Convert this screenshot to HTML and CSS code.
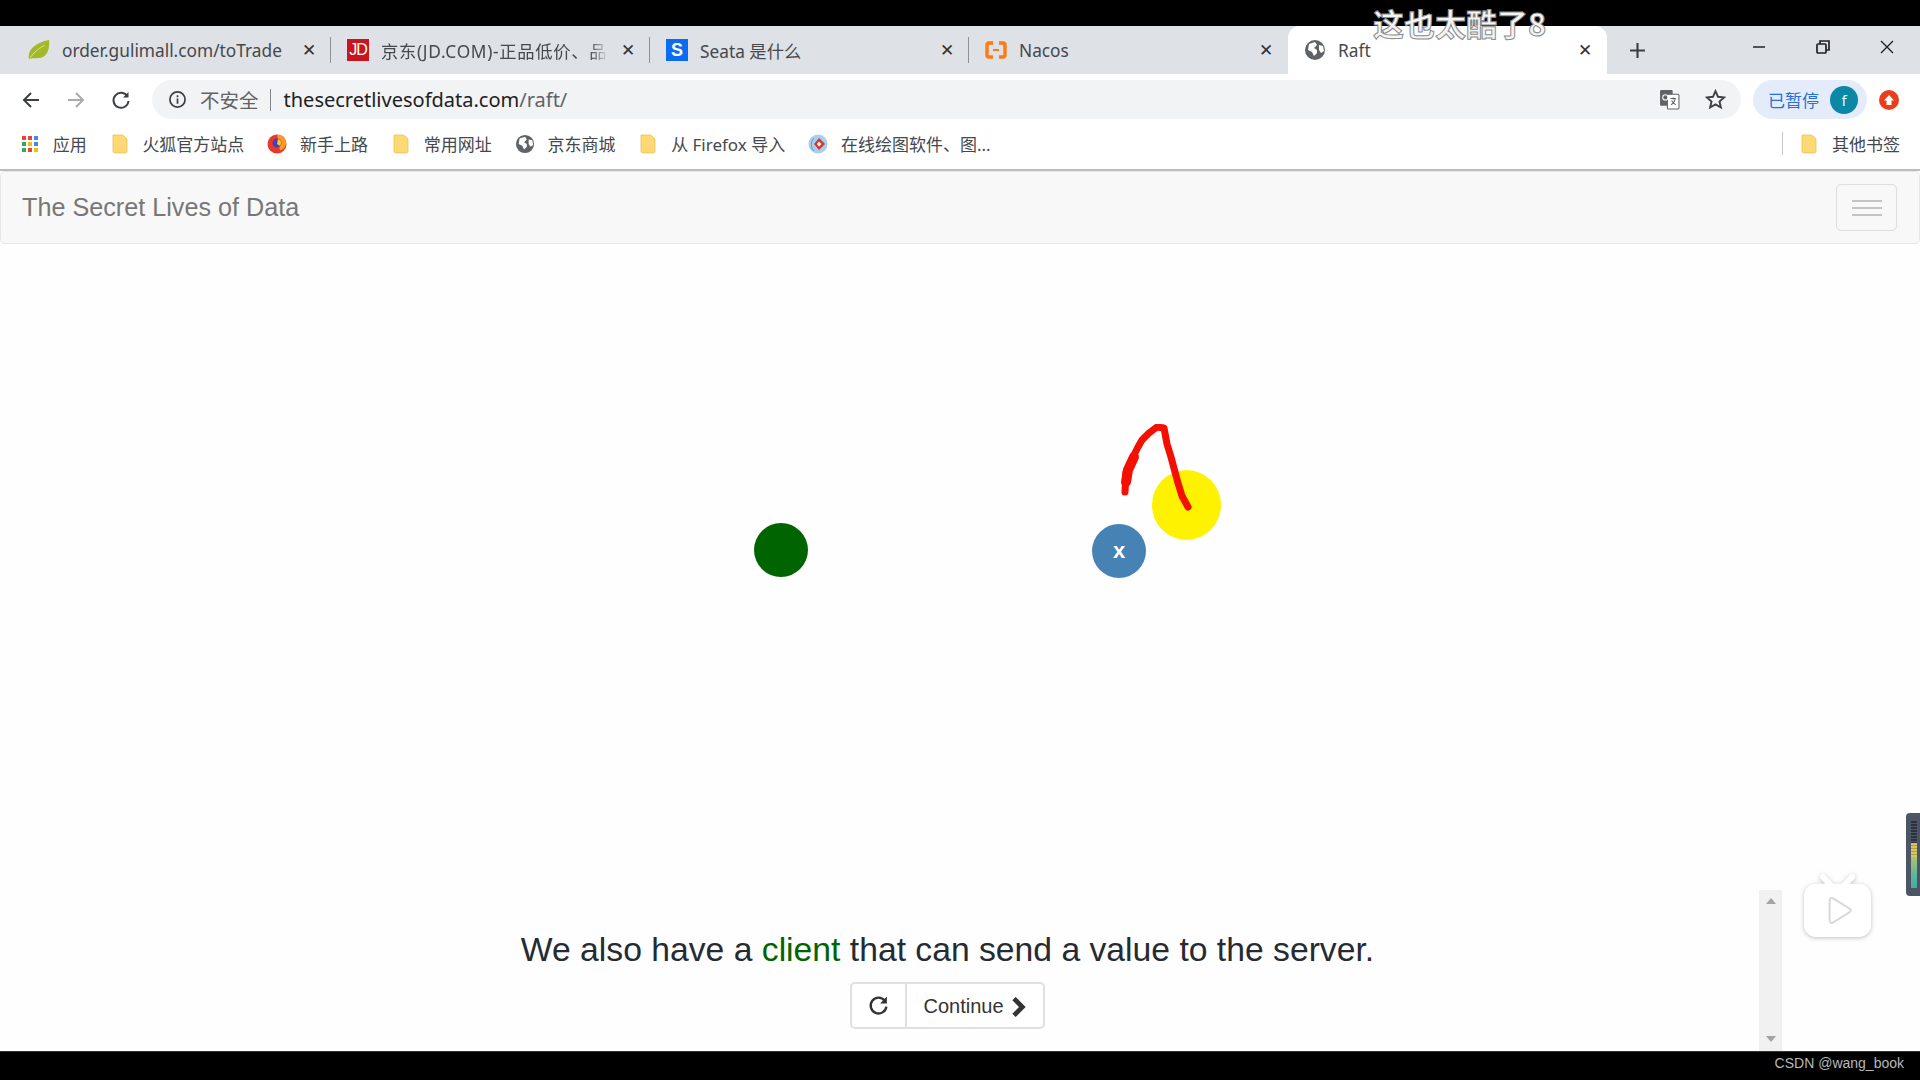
FILE: index.html
```html
<!DOCTYPE html>
<html lang="zh-CN">
<head>
  <meta charset="utf-8">
  <title>Raft</title>
  <link rel="stylesheet" href="styles.css">
</head>
<body>
  <div class="topbar"><span class="danmaku">这也太酷了8</span></div>

  <!-- tabs -->
  <div class="tabstrip">
    <div class="tab">
      <svg class="favicon leaf" viewBox="0 0 24 22"><path d="M1 21C-1 11 8 3 23 0c1 12-3 21-15 20-3 0-4 0-7 1z" fill="#a3b82a"/><path d="M2 20C7 13 12 9 18 6" stroke="#dfe6a0" fill="none"/></svg>
      <span class="tab-title">order.gulimall.com/toTrade</span>
      <span class="tab-close">✕</span>
    </div>
    <div class="tab">
      <span class="favicon box-jd">JD</span>
      <span class="tab-title fade">京东(JD.COM)-正品低价、品</span>
      <span class="tab-close">✕</span>
    </div>
    <div class="tab">
      <span class="favicon box-s">S</span>
      <span class="tab-title">Seata 是什么</span>
      <span class="tab-close">✕</span>
    </div>
    <div class="tab no-sep">
      <svg class="favicon" viewBox="0 0 22 22" fill="none" stroke="#ff7a10" stroke-width="3.400" stroke-linejoin="round"><path d="M8 4H4Q2 4 2 6v10q0 2 2 2h4M14 4h4q2 0 2 2v10q0 2-2 2h-4"/><path d="M8 11h6" stroke-width="2"/></svg>
      <span class="tab-title">Nacos</span>
      <span class="tab-close">✕</span>
    </div>
    <div class="tab active">
      <svg class="favicon" viewBox="0 0 22 22"><use href="#globe"/></svg>
      <span class="tab-title">Raft</span>
      <span class="tab-close">✕</span>
    </div>
    <svg class="newtab" viewBox="0 0 16 16"><path d="M8 1v14M1 8h14" stroke="#3c4043" stroke-width="2"/></svg>
    <div class="winctl">
      <svg viewBox="0 0 16 16"><path d="M2 8h12" stroke="#222" stroke-width="1.500"/></svg>
      <svg viewBox="0 0 16 16" fill="none" stroke="#222" stroke-width="1.700"><rect x="2" y="5" width="9" height="9" rx="1"/><path d="M5 5V2h9v9h-3"/></svg>
      <svg viewBox="0 0 16 16"><path d="M2 2l12 12M14 2L2 14" stroke="#222" stroke-width="1.400"/></svg>
    </div>
  </div>

  <!-- address bar -->
  <div class="toolbar">
    <svg class="navicon" viewBox="0 0 20 20" fill="none" stroke="#3c4043" stroke-width="2"><path d="M18 10H3M10 3l-7 7 7 7"/></svg>
    <svg class="navicon" viewBox="0 0 20 20" fill="none" stroke="#a8abaf" stroke-width="2"><path d="M2 10h15M10 3l7 7-7 7"/></svg>
    <svg class="navicon" viewBox="0 0 20 20" fill="none" stroke="#3c4043" stroke-width="2"><path d="M16.500 6.500A7.500 7.500 0 1 0 17.500 11"/><path d="M17.500 2v5.500H12" fill="#3c4043" stroke="none"/></svg>
    <div class="omnibox">
      <svg class="info" viewBox="0 0 20 20" fill="none" stroke="#3c4043" stroke-width="1.800"><circle cx="10" cy="10" r="8"/><path d="M10 9v5.500M10 5.500v2"/></svg>
      <span class="insecure">不安全</span>
      <span class="omni-sep"></span>
      <span class="url">thesecretlivesofdata.com<span class="url-path">/raft/</span></span>
      <svg class="omni-icon translate" viewBox="0 0 20 20"><rect x="1" y="1" width="12" height="15" rx="1" fill="#5f6368"/><rect x="8" y="5" width="11" height="14" rx="1" fill="#fff" stroke="#5f6368"/><path d="M11 9h5M13.500 8v2M15.500 9c-.5 3-2 5-4 6M12 11c1 2 2 3 4 4" stroke="#5f6368" fill="none"/><circle cx="6" cy="8" r="2.500" fill="none" stroke="#fff"/></svg>
      <svg class="omni-icon" viewBox="0 0 20 20" fill="none" stroke="#3c4043" stroke-width="1.800"><path d="M10 2l2.400 5.400 5.800.6-4.400 3.900 1.300 5.700L10 14.700l-5.100 2.900 1.300-5.700L1.800 8l5.800-.6z"/></svg>
    </div>
    <div class="paused">
      <span>已暂停</span>
      <span class="avatar">f</span>
    </div>
    <span class="ext"><svg viewBox="0 0 14 14"><path d="M7 2l5 5.500H9.500V12h-5V7.500H2z" fill="#fff"/></svg></span>
  </div>

  <!-- bookmarks -->
  <div class="bookmarks">
    <div class="bm">
      <svg class="bm-icon" viewBox="0 0 20 20"><g fill="#ea4335"><rect x="2" y="2" width="4" height="4"/><rect x="8" y="2" width="4" height="4"/></g><rect x="14" y="2" width="4" height="4" fill="#4285f4"/><rect x="2" y="8" width="4" height="4" fill="#34a853"/><rect x="8" y="8" width="4" height="4" fill="#fbbc05"/><rect x="14" y="8" width="4" height="4" fill="#4285f4"/><rect x="2" y="14" width="4" height="4" fill="#34a853"/><rect x="8" y="14" width="4" height="4" fill="#ea4335"/><rect x="14" y="14" width="4" height="4" fill="#fbbc05"/></svg>
      应用
    </div>
    <div class="bm"><svg class="bm-icon" viewBox="0 0 20 20"><use href="#folder"/></svg>火狐官方站点</div>
    <div class="bm">
      <svg class="bm-icon" viewBox="0 0 20 20"><circle cx="10" cy="10" r="9.500" fill="#e8392b"/><path d="M10 .5a9.500 9.500 0 0 1 9 7c.5 4-2 8-6 9z" fill="#ff9a1f"/><circle cx="10" cy="9" r="4.500" fill="#4a3fb5"/><path d="M11 5c3 1 4 4 2 7l-3-2z" fill="#ffca28"/></svg>
      新手上路
    </div>
    <div class="bm"><svg class="bm-icon" viewBox="0 0 20 20"><use href="#folder"/></svg>常用网址</div>
    <div class="bm"><svg class="bm-icon" viewBox="0 0 22 22"><use href="#globe"/></svg>京东商城</div>
    <div class="bm"><svg class="bm-icon" viewBox="0 0 20 20"><use href="#folder"/></svg>从 Firefox 导入</div>
    <div class="bm">
      <svg class="bm-icon" viewBox="0 0 20 20"><circle cx="10" cy="10" r="9.500" fill="#a9cfee"/><path d="M6 4a9 9 0 0 0 0 13" stroke="#5b9bd5" fill="none"/><path d="M11 4l6 6-6 6-5-6z" fill="#d9352b"/><path d="M11 7.500l2.500 2.500-2.500 2.500L8.800 10z" fill="#fff"/></svg>
      在线绘图软件、图...
    </div>
    <div class="bm-right">
      <span class="bm-sep"></span>
      <div class="bm"><svg class="bm-icon" viewBox="0 0 20 20"><use href="#folder"/></svg>其他书签</div>
    </div>
  </div>

  <!-- page -->
  <div class="page">
    <div class="navbar">
      <span class="brand">The Secret Lives of Data</span>
      <span class="hamburger"><i></i><i></i><i></i></span>
    </div>

    <div class="stage">
      <div class="node node-green"></div>
      <div class="node node-blue">x</div>
      <div class="node node-yellow"></div>
      <svg class="scribble" viewBox="0 0 80 90" fill="none" stroke="#f40f00" stroke-width="7" stroke-linecap="round" stroke-linejoin="round"><path d="M5 68L6 48 12 35 18 23 22 16 29 9 37 3 44 4 47 20 51 33 55 48 58 59 62 72 68 83"/><path d="M6 58L8 46 14 33" stroke-width="10"/></svg>
    </div>

    <div class="caption">
      <p class="caption-text">We also have a <span class="client">client</span> that can send a value to the server.</p>
      <div class="btn-group">
        <span class="btn btn-reset"><svg viewBox="0 0 20 20" fill="none" stroke="#333" stroke-width="2.200"><path d="M16 5.500A7.500 7.500 0 1 0 17.500 11"/><path d="M18 1.500v6.500h-6.500z" fill="#333" stroke="none"/></svg></span>
        <span class="btn">Continue <svg class="chevron" viewBox="0 0 12 18"><path d="M3 0l9 9-9 9-3-3 6-6-6-6z" fill="#333"/></svg></span>
      </div>
    </div>

    <div class="scrollbar"><i class="arrow-up"></i><i class="arrow-down"></i></div>

    <svg class="player" viewBox="0 0 70 66">
      <path d="M20 3l9 9M50 3l-9 9" stroke="#fff" stroke-width="6" stroke-linecap="round"/>
      <rect x="1" y="10" width="68" height="54" rx="12" fill="#fff"/>
      <path d="M27 27q0-4 4-2l16 10q3 2 0 4L31 49q-4 2-4-2z" fill="#fff" stroke="#d8d8d8" stroke-width="2"/>
    </svg>

    <div class="meter"><i class="m-off"></i><i class="m-mid"></i><i class="m-low"></i></div>
  </div>

  <div class="bottombar">CSDN @wang_book</div>

  <svg class="defs" width="0" height="0">
    <symbol id="folder" viewBox="0 0 20 20"><path d="M3 1h8q2 0 3 1l3 3v12q0 2-2 2H5q-2 0-2-2z" fill="#fdd976" stroke="#e8c354" stroke-width=".8"/></symbol>
    <symbol id="globe" viewBox="0 0 22 22"><circle cx="11" cy="11" r="10" fill="#5f6368"/><path d="M5 5l6-2 2 3-3 3 3 2v3l-3 3-2-4-4-2zM15 6l4 1 1 5-3 2-2-3z" fill="#fff"/></symbol>
  </svg>
</body>
</html>
```

FILE: styles.css
```css
* {
  box-sizing: border-box;
}
html, body {
  margin: 0;
  height: 100%;
}
body {
  width: 1920px;
  height: 1080px;
  overflow: hidden;
  display: flex;
  flex-direction: column;
  font-family: "Noto Sans", "Noto Sans CJK SC", sans-serif;
  color: #3c4043;
  background: #000;
}

/* black band and the danmaku over it */
.topbar {
  height: 26px;
  background: #000;
  position: relative;
}
.danmaku {
  position: absolute;
  left: 1373px;
  top: 3px;
  z-index: 5;
  font-family: "Noto Sans CJK SC", sans-serif;
  font-size: 31px;
  line-height: 40px;
  font-weight: 700;
  white-space: nowrap;
  color: #f4f4f4;
  -webkit-text-stroke: 1px #8c8c8c;
}

/* tabs */
.tabstrip {
  height: 48px;
  background: #dee1e6;
  display: flex;
  align-items: center;
  padding-left: 12px;
}
.tab {
  width: 319px;
  height: 48px;
  flex: none;
  display: flex;
  align-items: center;
  gap: 12px;
  padding: 0 14px 0 16px;
  position: relative;
  font-size: 17.300px;
  color: #45484d;
}
.tab::after {
  content: "";
  position: absolute;
  right: 0;
  top: 11px;
  height: 26px;
  width: 1px;
  background: #8e9196;
}
.tab.no-sep::after, .tab.active::after {
  display: none;
}
.tab.active {
  background: #fff;
  border-radius: 12px 12px 0 0;
}
.favicon {
  width: 22px;
  height: 22px;
  flex: none;
}
.box-jd, .box-s {
  display: flex;
  align-items: center;
  justify-content: center;
  font-family: "Liberation Sans", sans-serif;
  font-size: 16px;
  color: #fff;
}
.box-jd {
  background: #c9151e;
  letter-spacing: -1px;
}
.box-s {
  background: #0a6cf0;
  font-weight: 700;
  font-size: 18px;
}
.tab-title {
  flex: 1;
  min-width: 0;
  white-space: nowrap;
}
.fade {
  letter-spacing: 0.7px;
  -webkit-mask-image: linear-gradient(to right, #000 92%, transparent);
  mask-image: linear-gradient(to right, #000 92%, transparent);
}
.tab-close {
  width: 16px;
  font-size: 17px;
  text-align: center;
  color: #333;
  font-family: "DejaVu Sans", sans-serif;
}
.newtab {
  width: 17px;
  height: 17px;
  margin-left: 22px;
}
.winctl {
  display: flex;
  margin-left: auto;
  margin-right: 25px;
  margin-top: -7px;
  gap: 48px;
}
.winctl svg {
  width: 16px;
  height: 16px;
}

/* address bar */
.toolbar {
  height: 46px;
  background: #fff;
  display: flex;
  align-items: center;
  padding: 6px 21px 1px 21px;
}
.navicon {
  width: 20px;
  height: 20px;
  margin-right: 25px;
}
.navicon:nth-child(3) {
  margin-right: 21px;
}
.omnibox {
  flex: 1;
  height: 39px;
  margin-right: 12px;
  background: #f1f3f4;
  border-radius: 20px;
  display: flex;
  align-items: center;
  padding: 0 15px 0 16px;
}
.info {
  width: 19px;
  height: 19px;
}
.insecure {
  margin-left: 13px;
  font-size: 19.500px;
  color: #5f6368;
}
.omni-sep {
  width: 1px;
  height: 22px;
  margin: 0 13px 0 11px;
  background: #80868b;
}
.url {
  flex: 1;
  font-size: 20px;
  color: #202124;
}
.url-path {
  color: #5f6368;
}
.omni-icon {
  width: 21px;
  height: 21px;
}
.translate {
  margin-right: 25px;
}
.paused {
  width: 114px;
  height: 39px;
  border-radius: 20px;
  background: #e4ebfa;
  display: flex;
  align-items: center;
  justify-content: space-between;
  padding: 0 9px 0 15px;
  font-size: 17px;
  color: #2a6fd6;
}
.avatar {
  width: 28px;
  height: 28px;
  border-radius: 50%;
  background: #0a88a6;
  color: #dff;
  font-size: 15px;
  line-height: 28px;
  text-align: center;
}
.ext {
  width: 20px;
  height: 20px;
  margin-left: 12px;
  border-radius: 50%;
  background: #ea3d1c;
  padding: 3px;
  display: flex;
}

/* bookmarks */
.bookmarks {
  height: 51px;
  background: #fff;
  display: flex;
  align-items: center;
  gap: 23px;
  padding: 0 20px 2px 20px;
  border-bottom: 2px solid #bcbcbc;
  font-size: 17px;
  color: #45484d;
}
.bm {
  display: flex;
  align-items: center;
  gap: 12.700px;
  white-space: nowrap;
}
.bm-icon {
  width: 20px;
  height: 20px;
  flex: none;
}
.bm-right {
  margin-left: auto;
  display: flex;
  align-items: center;
  gap: 16px;
}
.bm-sep {
  width: 1px;
  height: 23px;
  background: #c8c8c8;
}

/* page */
.page {
  flex: 1;
  background: #fefefe;
  display: flex;
  flex-direction: column;
  position: relative;
  font-family: "Liberation Sans", Arial, sans-serif;
}
.navbar {
  height: 73px;
  flex: none;
  background: #f8f8f8;
  border: 1px solid #e7e7e7;
  border-radius: 5px;
  display: flex;
  align-items: center;
  justify-content: space-between;
  padding: 0 22px 0 21px;
}
.brand {
  font-size: 25.200px;
  color: #777;
}
.hamburger {
  width: 61px;
  height: 47px;
  border: 1px solid #ddd;
  border-radius: 5px;
  display: flex;
  flex-direction: column;
  justify-content: center;
  align-items: center;
  gap: 5px;
}
.hamburger i {
  display: block;
  width: 30px;
  height: 2px;
  background: #c4c4c4;
}
.stage {
  flex: 1;
  position: relative;
}
.node {
  position: absolute;
  border-radius: 50%;
}
.node-green {
  left: 754px;
  top: 279px;
  width: 54px;
  height: 54px;
  background: #006400;
}
.node-blue {
  left: 1092px;
  top: 280px;
  width: 54px;
  height: 54px;
  background: #4682b4;
  color: #fff;
  font-size: 22px;
  font-weight: 700;
  line-height: 54px;
  text-align: center;
}
.node-yellow {
  left: 1152px;
  top: 226px;
  width: 69px;
  height: 70px;
  background: #fff200;
}
.scribble {
  position: absolute;
  left: 1120px;
  top: 180px;
  width: 80px;
  height: 90px;
}
.caption {
  flex: none;
  display: flex;
  flex-direction: column;
  align-items: center;
  padding: 0 25px 22px 0;
}
.caption-text {
  margin: 0 0 10px;
  font-size: 33.700px;
  line-height: 46px;
  color: #262b33;
}
.client {
  color: #006400;
}
.btn-group {
  display: flex;
  height: 47px;
  background: #fff;
  border: 2px solid #e0e0e0;
  border-radius: 5px;
  font-size: 20px;
  color: #333;
}
.btn {
  display: flex;
  align-items: center;
  gap: 8px;
  padding: 2px 17px 0 16px;
}
.btn-reset {
  width: 55px;
  justify-content: center;
  padding: 0;
  border-right: 2px solid #e0e0e0;
}
.btn-reset svg {
  width: 21px;
  height: 21px;
}
.chevron {
  width: 14px;
  height: 20px;
}
.scrollbar {
  position: absolute;
  left: 1759px;
  top: 719px;
  width: 23px;
  height: 161px;
  background: #f1f1f1;
  display: flex;
  flex-direction: column;
  justify-content: space-between;
  align-items: center;
  padding: 8px 0 9px;
}
.arrow-up, .arrow-down {
  width: 0;
  height: 0;
  border-left: 5px solid transparent;
  border-right: 5px solid transparent;
}
.arrow-up {
  border-bottom: 6px solid #a3a3a3;
}
.arrow-down {
  border-top: 6px solid #a3a3a3;
}
.player {
  position: absolute;
  left: 1803px;
  top: 703px;
  width: 69px;
  height: 65px;
  filter: drop-shadow(0 1px 2px rgba(0, 0, 0, 0.25));
}

/* level meter at the window edge */
.meter {
  position: absolute;
  left: 1906px;
  top: 642px;
  width: 14px;
  height: 83px;
  background: #4c5563;
  border-radius: 4px 0 0 4px;
  padding: 8px 0 8px 5px;
  display: flex;
  flex-direction: column;
}
.meter i {
  display: block;
  width: 6px;
}
.m-off {
  height: 22px;
  background: repeating-linear-gradient(to bottom, #2c333e 0 2px, #4c5563 2px 3px);
}
.m-mid {
  height: 14px;
  background: repeating-linear-gradient(to bottom, #d8c75f 0 2px, #a99f5a 2px 3px);
}
.m-low {
  height: 31px;
  background: linear-gradient(to bottom, #a9c46c, #58b8a0 60%, #4aa9a0);
}

.bottombar {
  height: 29px;
  flex: none;
  background: #000;
  border-top: 1px solid #1c3a57;
  padding-right: 16px;
  text-align: right;
  font-family: "Liberation Sans", Arial, sans-serif;
  font-size: 14px;
  line-height: 22px;
  color: #b8b8b8;
}
.defs {
  position: absolute;
}
```
